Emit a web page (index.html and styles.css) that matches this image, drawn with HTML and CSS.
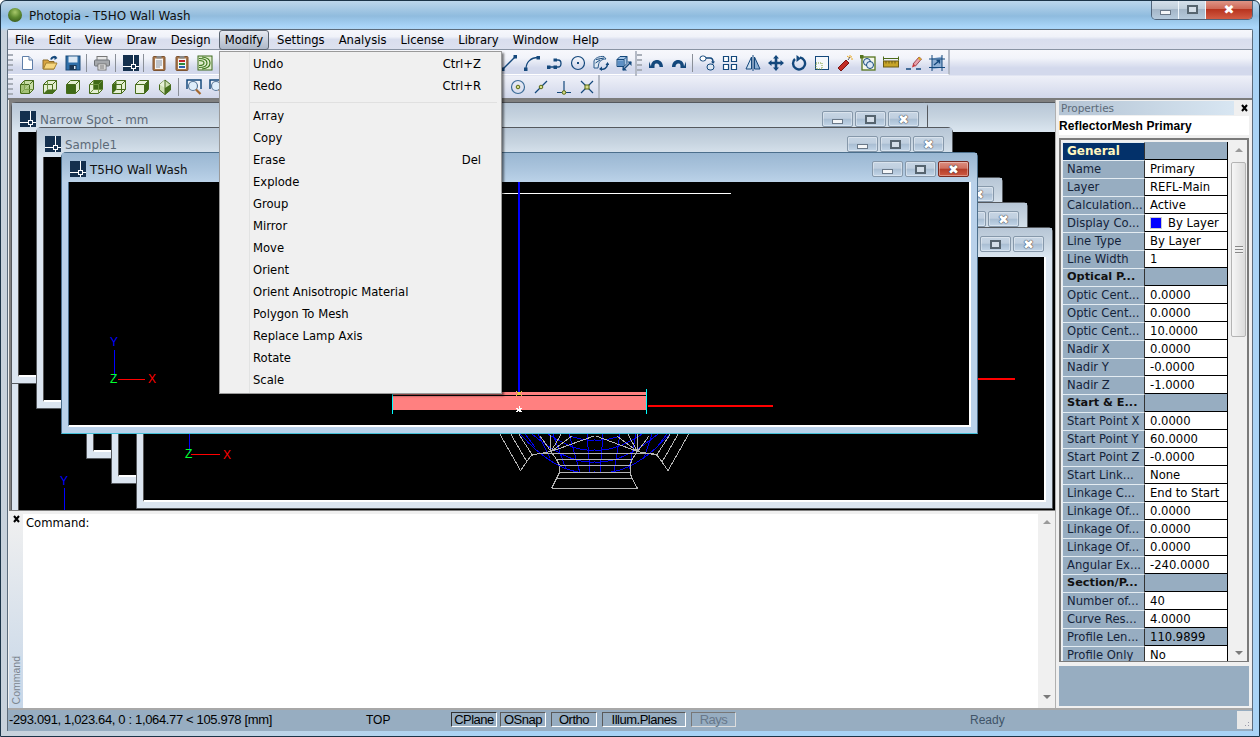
FILE: index.html
```html
<!DOCTYPE html>
<html lang="en">
<head>
<meta charset="utf-8">
<title>Photopia - T5HO Wall Wash</title>
<link rel="stylesheet" href="styles.css">
</head>
<body>
<svg class="defs" width="0" height="0" aria-hidden="true">
  <symbol id="i-grid" viewBox="0 0 16 16"><rect width="16" height="16" fill="#14304e"/><path d="M0 11.5H16M10.5 0V16" stroke="#fff" fill="none"/><rect x="8.5" y="9.5" width="4" height="4" fill="#14304e" stroke="#fff"/></symbol>
  <symbol id="i-new" viewBox="0 0 16 16"><path d="M3.5 1.5H10L13.5 5V14.5H3.5Z" fill="#fff" stroke="#5e7ea8"/><path d="M10 1.5V5H13.5" fill="#dce6f4" stroke="#5e7ea8"/></symbol>
  <symbol id="i-open" viewBox="0 0 16 16"><path d="M1 5H6L7 6.5H12V14H1Z" fill="#d9a441" stroke="#8a6a2a"/><path d="M1.5 14L4 8H15L12 14Z" fill="#f6d67e" stroke="#a5822f"/><path d="M9 4.5C10 2 12 1.5 14 2.500" stroke="#14487c" stroke-width="2" fill="none"/><path d="M12.500 .5L15.500 3L12.500 5Z" fill="#14487c"/></symbol>
  <symbol id="i-save" viewBox="0 0 16 16"><rect x="1" y="1" width="14" height="14" fill="#2f6ea8" stroke="#1b4a78"/><rect x="3.500" y="1.500" width="9" height="6" fill="#dce8f4"/><rect x="4.500" y="10" width="7" height="5" fill="#1b3654"/><rect x="9" y="11" width="1.500" height="3" fill="#dce8f4"/></symbol>
  <symbol id="i-print" viewBox="0 0 16 16"><rect x="3" y="1.500" width="10" height="4" fill="#e8e8e8" stroke="#777"/><rect x=".5" y="5" width="15" height="6" rx="1" fill="#a5a8ac" stroke="#6d7176"/><rect x="4" y="9" width="8" height="6" fill="#fff" stroke="#777"/><path d="M5.500 11H10.500M5.500 13H10.500" stroke="#555"/></symbol>
  <symbol id="i-clip" viewBox="0 0 16 16"><rect x="2" y="1.500" width="12" height="14" rx="1" fill="#a8764a" stroke="#7c5330"/><rect x="4" y="3.500" width="8" height="10.500" fill="#f4f4f4"/><rect x="5.500" y="1" width="5" height="2.500" fill="#888"/><path d="M5 6H11M5 8H11M5 10H11M5 12H9" stroke="#8a93a0"/></symbol>
  <symbol id="i-clip2" viewBox="0 0 16 16"><rect x="2" y="1.500" width="12" height="14" rx="1" fill="#a8764a" stroke="#7c5330"/><rect x="4" y="3.500" width="8" height="10.500" fill="#f4f4f4"/><rect x="5.500" y="1" width="5" height="2.500" fill="#888"/><rect x="5" y="5" width="6" height="2" fill="#c2242a"/><rect x="5" y="8" width="6" height="2" fill="#2c8a3c"/><rect x="5" y="11" width="6" height="2" fill="#2a5fb0"/></symbol>
  <symbol id="i-wave" viewBox="0 0 16 16"><rect x="1" y="1" width="14" height="14" fill="#dfeccd" stroke="#3f6b1e"/><path d="M2 5.500C5 5.500 7 6.500 7 8S5 10.500 2 10.500M2 3.500C7 3.500 10 5.500 10 8S7 12.500 2 12.500M5 2C10 2.500 13 5 13 8S10 13.500 5 14" fill="none" stroke="#3f7a20" stroke-width="1.200"/></symbol>
  <symbol id="c1" viewBox="0 0 16 16"><path d="M1.500 5.500L5.500 1.500H14.500V10.500L10.500 14.500H1.500Z" fill="#c7dca4" stroke="#466b1a"/><path d="M1.500 5.500H10.500V14.500M10.500 5.500L14.500 1.500" fill="none" stroke="#466b1a"/><path d="M1.500 14.500L10.500 5.500" stroke="#fff"/><path d="M5.500 1.500V10.500H14.500M5.500 10.500L1.500 14.500" fill="none" stroke="#6e9340"/><path d="M2 6H10V14H2Z" fill="#8cb05a" opacity=".6"/></symbol>
  <symbol id="c2" viewBox="0 0 16 16"><path d="M1.500 5.500L5.500 1.500H14.500V10.500L10.500 14.500H1.500Z" fill="#e4efd2" stroke="#466b1a"/><path d="M1.500 5.500H10.500V14.500M10.500 5.500L14.500 1.500" fill="none" stroke="#466b1a"/><path d="M1.500 14.500L5.500 10.500H14.500L10.500 14.500Z" fill="#47701c"/><path d="M5.500 1.500V10.500" stroke="#6e9340"/></symbol>
  <symbol id="c3" viewBox="0 0 16 16"><path d="M1.500 5.500L5.500 1.500H14.500V10.500L10.500 14.500H1.500Z" fill="#e4efd2" stroke="#466b1a"/><path d="M2 6H10V14H2Z" fill="#3f6a16"/><path d="M1.500 5.500H10.500V14.500M10.500 5.500L14.500 1.500" fill="none" stroke="#466b1a"/></symbol>
  <symbol id="c4" viewBox="0 0 16 16"><path d="M1.500 5.500L5.500 1.500H14.500V10.500L10.500 14.500H1.500Z" fill="#e4efd2" stroke="#466b1a"/><path d="M6 2H14V10H6Z" fill="#3f6a16"/><path d="M1.500 5.500H10.500V14.500M10.500 5.500L14.500 1.500M5.500 1.500V10.500H14.500M5.500 10.500L1.500 14.500" fill="none" stroke="#6e9340"/></symbol>
  <symbol id="c5" viewBox="0 0 16 16"><path d="M1.500 5.500L5.500 1.500H14.500V10.500L10.500 14.500H1.500Z" fill="#e4efd2" stroke="#466b1a"/><path d="M2 6L5.500 2V10.500L2 14Z" fill="#3f6a16"/><path d="M1.500 5.500H10.500V14.500M10.500 5.500L14.500 1.500M5.500 10.500H14.500" fill="none" stroke="#466b1a"/></symbol>
  <symbol id="c6" viewBox="0 0 16 16"><path d="M1.500 5.500L5.500 1.500H14.500V10.500L10.500 14.500H1.500Z" fill="#e9f2da" stroke="#466b1a"/><path d="M11 5.500L14 2V10.500L11 14Z" fill="#3f6a16"/><path d="M1.500 5.500H10.500V14.500M10.500 5.500L14.500 1.500" fill="none" stroke="#466b1a"/></symbol>
  <symbol id="c7" viewBox="0 0 16 16"><path d="M8 1L13.500 5.500V11L8 15.500L2.500 11V5.500Z" fill="#cfe0b4" stroke="#466b1a"/><path d="M8 1L2.500 5.500L8 9Z" fill="#e9f2da"/><path d="M8 9L13.500 5.500V11L8 15.500Z" fill="#47701c"/><path d="M8 1V15.500" stroke="#466b1a"/></symbol>
  <symbol id="i-zoom" viewBox="0 0 16 16"><path d="M1 10V1H15V10" fill="#eef3fa" stroke="#14487c" stroke-width="1.500"/><circle cx="7" cy="7" r="4.500" fill="#dfeefb" stroke="#5a7898" stroke-width="1.200"/><path d="M10 10.500L14.500 15" stroke="#a5682f" stroke-width="2.200"/></symbol>
  <symbol id="i-line" viewBox="0 0 16 16"><path d="M2 14L14 2" stroke="#14487c" stroke-width="1.300"/><rect x="0" y="12.500" width="3.500" height="3.500" fill="#14487c"/><rect x="12.500" y="0" width="3.500" height="3.500" fill="#14487c"/></symbol>
  <symbol id="i-arc" viewBox="0 0 16 16"><path d="M2 14C2 7 7 2.500 14 2.500" fill="none" stroke="#14487c" stroke-width="1.300"/><rect x="0" y="12.500" width="3.500" height="3.500" fill="#14487c"/><rect x="12.500" y="1" width="3.500" height="3.500" fill="#14487c"/></symbol>
  <symbol id="i-poly" viewBox="0 0 16 16"><path d="M1 12H11C15 12 15 5 11 5H8" fill="none" stroke="#14487c" stroke-width="1.300"/><rect x="0" y="10.500" width="3.500" height="3.500" fill="#14487c"/><rect x="6.500" y="10.500" width="3.500" height="3.500" fill="#14487c"/><rect x="6.500" y="3.500" width="3.500" height="3" fill="#14487c"/></symbol>
  <symbol id="i-circle" viewBox="0 0 16 16"><circle cx="8" cy="8" r="6.500" fill="none" stroke="#14487c" stroke-width="1.200"/><rect x="7" y="7" width="2" height="2" fill="#14487c"/></symbol>
  <symbol id="i-rev" viewBox="0 0 16 16"><path d="M1 13V6C2 3 6 1 11 1.500L13 4C9 4 6 6 5.500 10L5 13Z" fill="#dfe8f2" stroke="#2b5a8a"/><path d="M3 4.500L11 3M2.500 8L7 5" stroke="#14487c"/><path d="M8 14C11 15 14 13 14.500 9.500" fill="none" stroke="#14487c" stroke-width="1.600"/><path d="M12.500 10H16.500L14.500 7Z M9 11.500V16L6 14Z" fill="#14487c"/></symbol>
  <symbol id="i-ext" viewBox="0 0 16 16"><path d="M1 4.500L4 1.500H11V8.500L8 11.500H1Z" fill="#a8c6e6" stroke="#14487c"/><path d="M1 4.500H8V11.500M8 4.500L11 1.500" fill="none" stroke="#14487c"/><path d="M2 5.500H7.500V11H2Z" fill="#5d8fc4"/><path d="M7 15L15 7" stroke="#14487c" stroke-width="1.500"/><path d="M15.500 6.500V11L11.500 6.500ZM6.500 15.500V11L11 15.500Z" fill="#14487c"/></symbol>
  <symbol id="i-undo" viewBox="0 0 16 16"><path d="M3 12C3 7.500 6 5.500 9 5.500S15 8 15 12.500H11.500C11.500 10.500 10.500 9 8.500 9S6.500 10.500 6.500 12.500L6.500 13.500H1V7Z" fill="#14487c" transform="translate(0 -.5)"/></symbol>
  <symbol id="i-redo" viewBox="0 0 16 16"><path d="M13 12C13 7.500 10 5.500 7 5.500S1 8 1 12.500H4.500C4.500 10.500 5.500 9 7.500 9S9.500 10.500 9.500 12.500L9.500 13.500H15V7Z" fill="#14487c" transform="translate(0 -.5)"/></symbol>
  <symbol id="i-copy" viewBox="0 0 16 16"><rect x="1" y="1" width="6" height="5" rx="2.500" fill="#fff" stroke="#14487c"/><rect x="8" y="9" width="7" height="6" rx="3" fill="#dfe8f2" stroke="#14487c"/><path d="M7 3H11C13 3 14 4 14 7" fill="none" stroke="#14487c" stroke-width="1.500"/><path d="M12 6.500H16L14 9Z" fill="#14487c"/></symbol>
  <symbol id="i-array" viewBox="0 0 16 16"><path d="M1.500 1.500H6.500V6.500H1.500ZM9.500 1.500H14.500V6.500H9.500ZM1.500 9.500H6.500V14.500H1.500ZM9.500 9.500H14.500V14.500H9.500Z" fill="#fff" stroke="#14487c" stroke-width="1.200"/></symbol>
  <symbol id="i-mirror" viewBox="0 0 16 16"><path d="M6.500 2L1 14H6.500Z" fill="#cfe0f0" stroke="#14487c"/><path d="M9.500 2L15 14H9.500Z" fill="#8db0d4" stroke="#14487c"/><path d="M8 0V16" stroke="#14487c"/></symbol>
  <symbol id="i-move" viewBox="0 0 16 16"><path d="M8 0L11 3.500H9.300V6.700H12.500V5L16 8L12.500 11V9.300H9.300V12.500H11L8 16L5 12.500H6.700V9.300H3.500V11L0 8L3.500 5V6.700H6.700V3.500H5Z" fill="#14487c"/></symbol>
  <symbol id="i-rot" viewBox="0 0 16 16"><path d="M9 2.500A6 6 0 1 1 4 4" fill="none" stroke="#14487c" stroke-width="2.400"/><path d="M5.500 0V7L10 3.500Z" fill="#14487c"/></symbol>
  <symbol id="i-scale" viewBox="0 0 16 16"><rect x="1.500" y="1.500" width="13" height="13" fill="#f4f7fb" stroke="#14487c"/><rect x="2" y="8" width="6" height="6" fill="none" stroke="#7a9a30" stroke-dasharray="1 1"/></symbol>
  <symbol id="i-dyn" viewBox="0 0 16 16"><path d="M1 13L9 5L12 8L4 16Z" fill="#c22d26" stroke="#7c1410"/><path d="M11 5C12 4 12 3 13 2" stroke="#555" fill="none"/><path d="M13 0V2M15 1.500L13.500 2.500M16 4H14M10 1L12 2.500" stroke="#e8a820"/></symbol>
  <symbol id="i-lens" viewBox="0 0 16 16"><rect x="2" y="2" width="13" height="13" fill="#f4f7ea" stroke="#55741e" stroke-width="1.300"/><rect x="0" y="0" width="3.500" height="3.500" fill="#55741e"/><circle cx="7" cy="7" r="3.500" fill="#dfeaf5" stroke="#14487c"/><circle cx="10" cy="10" r="3.500" fill="#dfeaf5" stroke="#14487c"/></symbol>
  <symbol id="i-ruler" viewBox="0 0 16 16"><rect x=".5" y="6" width="15" height="6" fill="#c8a528" stroke="#6c5a14"/><path d="M.5 3.500H15.500M.5 1.500V5.500M15.500 1.500V5.500" stroke="#4c6a18"/><path d="M3 6V8.500M6 6V8.500M9 6V8.500M12 6V8.500" stroke="#6c5a14"/></symbol>
  <symbol id="i-brush" viewBox="0 0 16 16"><path d="M7 9L13 2L15.500 4L9.500 11Z" fill="#e8a0a8" stroke="#9a4a58"/><path d="M12 3.500L14 5.500L15.500 4L13 2Z" fill="#d8b020"/><path d="M7 9L9.500 11L6 12.500Z" fill="#c33"/><path d="M0 14H5M10 14H15" stroke="#14487c" stroke-width="1.500"/></symbol>
  <symbol id="i-mesh" viewBox="0 0 16 16"><path d="M3 3.500L13 1.500V12.500L3 14.500Z" fill="#8fb0d4"/><path d="M0 4H16M0 12.500H16M3 0V16M13 0V16" stroke="#14487c"/><path d="M5 10L10 6M7.500 5.500H10.500V8.500" stroke="#14487c" fill="none" stroke-width="1.400"/></symbol>
  <symbol id="s-cen" viewBox="0 0 16 16"><circle cx="8" cy="8" r="6.500" fill="none" stroke="#3c6c98" stroke-width="1.200"/><circle cx="8" cy="8" r="1.800" fill="#d6dc8a" stroke="#5a6a14"/></symbol>
  <symbol id="s-mid" viewBox="0 0 16 16"><path d="M2 14L14 2" stroke="#14487c" stroke-width="1.200"/><circle cx="8" cy="8" r="1.800" fill="#d6dc8a" stroke="#5a6a14"/></symbol>
  <symbol id="s-per" viewBox="0 0 16 16"><path d="M1 13.500H15M8 2V13" stroke="#14487c" stroke-width="1.200"/><circle cx="8" cy="13.500" r="1.800" fill="#d6dc8a" stroke="#5a6a14"/></symbol>
  <symbol id="s-int" viewBox="0 0 16 16"><path d="M2 2L14 14M14 2L2 14" stroke="#14487c" stroke-width="1.200"/><rect x="6" y="6" width="4" height="4" fill="#d6dc8a" stroke="#5a6a14"/></symbol>
  <symbol id="i-pad" viewBox="0 0 9 9"><path d="M2 1L7 7M7 1L2 7" stroke="#000" stroke-width="2" fill="none"/></symbol>
</svg>

<div class="app">
  <header class="glass">
    <span class="orb"></span>
    <span class="glass-title">Photopia - T5HO Wall Wash</span>
    <div class="caption">
      <span class="cap cap-min"><i class="glyph-min"></i></span>
      <span class="cap cap-max"><i class="glyph-max"></i></span>
      <span class="cap cap-close">✖</span>
    </div>
  </header>

  <div class="client">
    <nav class="menubar">
      <span class="mi">File</span><span class="mi">Edit</span><span class="mi">View</span><span class="mi">Draw</span><span class="mi">Design</span><span class="mi mi-on">Modify</span><span class="mi">Settings</span><span class="mi">Analysis</span><span class="mi">License</span><span class="mi">Library</span><span class="mi">Window</span><span class="mi">Help</span>
    </nav>

    <div class="dock">
      <div class="tb tb-one">
        <span class="grip"></span>
        <span class="ic"><svg><use href="#i-new"/></svg></span>
        <span class="ic"><svg><use href="#i-open"/></svg></span>
        <span class="ic"><svg><use href="#i-save"/></svg></span>
        <span class="sep"></span>
        <span class="ic"><svg><use href="#i-print"/></svg></span>
        <span class="sep"></span>
        <span class="ic"><svg><use href="#i-grid"/></svg></span>
        <span class="sep sep-tight"></span>
        <span class="ic"><svg><use href="#i-clip"/></svg></span>
        <span class="ic"><svg><use href="#i-clip2"/></svg></span>
        <span class="ic"><svg><use href="#i-wave"/></svg></span>
        <span class="gap-one"></span>
        <span class="ic"><svg><use href="#i-line"/></svg></span>
        <span class="ic"><svg><use href="#i-arc"/></svg></span>
        <span class="ic"><svg><use href="#i-poly"/></svg></span>
        <span class="ic"><svg><use href="#i-circle"/></svg></span>
        <span class="ic"><svg><use href="#i-rev"/></svg></span>
        <span class="ic"><svg><use href="#i-ext"/></svg></span>
        <span class="tb-break"></span>
        <span class="grip"></span>
        <span class="ic"><svg><use href="#i-undo"/></svg></span>
        <span class="ic"><svg><use href="#i-redo"/></svg></span>
        <span class="sep sep-mid"></span>
        <span class="ic"><svg><use href="#i-copy"/></svg></span>
        <span class="ic"><svg><use href="#i-array"/></svg></span>
        <span class="ic"><svg><use href="#i-mirror"/></svg></span>
        <span class="ic"><svg><use href="#i-move"/></svg></span>
        <span class="ic"><svg><use href="#i-rot"/></svg></span>
        <span class="ic"><svg><use href="#i-scale"/></svg></span>
        <span class="ic"><svg><use href="#i-dyn"/></svg></span>
        <span class="ic"><svg><use href="#i-lens"/></svg></span>
        <span class="ic"><svg><use href="#i-ruler"/></svg></span>
        <span class="ic"><svg><use href="#i-brush"/></svg></span>
        <span class="ic"><svg><use href="#i-mesh"/></svg></span>
      </div>
      <div class="tb tb-two">
        <span class="grip"></span>
        <span class="ic"><svg><use href="#c1"/></svg></span>
        <span class="ic"><svg><use href="#c2"/></svg></span>
        <span class="ic"><svg><use href="#c3"/></svg></span>
        <span class="ic"><svg><use href="#c4"/></svg></span>
        <span class="ic"><svg><use href="#c5"/></svg></span>
        <span class="ic"><svg><use href="#c6"/></svg></span>
        <span class="ic"><svg><use href="#c7"/></svg></span>
        <span class="sep"></span>
        <span class="ic"><svg><use href="#i-zoom"/></svg></span>
        <span class="ic"><svg><use href="#i-zoom"/></svg></span>
        <span class="gap-two"></span>
        <span class="ic"><svg><use href="#s-cen"/></svg></span>
        <span class="ic"><svg><use href="#s-mid"/></svg></span>
        <span class="ic"><svg><use href="#s-per"/></svg></span>
        <span class="ic"><svg><use href="#s-int"/></svg></span>
      </div>
    </div>

    <div class="main">
      <div class="work">
        <div class="mdi-area">
          <section class="mdi w0">
            <div class="mdi-head"></div>
            <div class="mdi-view">
              <svg class="draw" viewBox="19 132 1100 400">
                <path d="M64.500 488V510" stroke="#00f"/>
                <text x="60" y="485" class="ax ax-y">Y</text>
              </svg>
            </div>
          </section>
          <section class="mdi w1">
            <div class="mdi-head">
              <svg class="mdi-ic"><use href="#i-grid"/></svg><span class="mdi-name">Narrow Spot - mm</span>
              <div class="mdi-btns"><span class="mb"><i class="glyph-min"></i></span><span class="mb"><i class="glyph-max"></i></span><span class="mb mb-x">✖</span></div>
            </div>
            <div class="mdi-view"></div>
          </section>
          <section class="mdi w2">
            <div class="mdi-head">
              <svg class="mdi-ic"><use href="#i-grid"/></svg><span class="mdi-name">Sample1</span>
              <div class="mdi-btns"><span class="mb"><i class="glyph-min"></i></span><span class="mb"><i class="glyph-max"></i></span><span class="mb mb-x">✖</span></div>
            </div>
            <div class="mdi-view"></div>
          </section>
          <section class="mdi w4">
            <div class="mdi-head"><div class="mdi-btns"><span class="mb"><i class="glyph-min"></i></span><span class="mb"><i class="glyph-max"></i></span><span class="mb mb-x">✖</span></div></div>
            <div class="mdi-view"></div>
          </section>
          <section class="mdi w5">
            <div class="mdi-head"><div class="mdi-btns"><span class="mb"><i class="glyph-min"></i></span><span class="mb"><i class="glyph-max"></i></span><span class="mb mb-x">✖</span></div></div>
            <div class="mdi-view"></div>
          </section>
          <section class="mdi w6">
            <div class="mdi-head"><div class="mdi-btns"><span class="mb"><i class="glyph-min"></i></span><span class="mb"><i class="glyph-max"></i></span><span class="mb mb-x">✖</span></div></div>
            <div class="mdi-view">
              <svg class="draw" viewBox="144 257 900 243">
                <path d="M978 379H1015" stroke="#f00" stroke-width="2"/>
                <path d="M189.500 434V453" stroke="#00f"/>
                <path d="M191 454.500H220" stroke="#f00"/>
                <text x="185" y="458" class="ax ax-z">Z</text>
                <text x="223" y="459" class="ax ax-x">X</text>
                <g fill="none" stroke="#0000f0">
                  <path d="M520 434Q560 478 594.500 472Q630 478 670 434"/>
                  <path d="M532 434Q568 464 594.500 462Q622 464 658 434"/>
                  <path d="M548 434Q575 452 594.500 450Q615 452 642 434"/>
                  <path d="M570 436Q585 441 594.500 440Q605 441 620 436"/>
                  <path d="M525 434L535 447M538 434L550 458M553 434L566 469M569 434L580 473M587 434L590 473M603 434L600 473M620 434L614 473M636 434L629 469M652 434L644 458M667 434L657 447"/>
                </g>
                <g fill="none" stroke="#b4b4b4">
                  <path d="M500 434.500L520.500 470.500L531.500 455L551 451.500M688.500 434.500L668 470.500L657 455L637.500 451.500"/>
                  <path d="M511 434.500L527 462M678 434.500L662 462M519 434.500L533 456M670 434.500L656 456"/>
                  <path d="M536.500 453.500H653.500"/>
                  <path d="M556.500 459.500H632M559.500 465.500H630M559.500 472.500H630M556.500 478.500H632M551.500 488.500H637.500"/>
                  <path d="M559.500 465.500V472.500L556.500 478.500L551.500 488.500M630 465.500V472.500L632 478.500L637.500 488.500M551 451.500L556.500 459.500L559.500 465.500M637.500 451.500L632 459.500L630 465.500"/>
                  <path d="M551 451.500L550 434.500M551 451.500L561 434.500M551 451.500L572 436M551 451.500L594 436M637.500 451.500L638 434.500M637.500 451.500L628 434.500M637.500 451.500L617 436M637.500 451.500L596 436M551 451.500L540 436M637.500 451.500L649 436"/>
                </g>
              </svg>
            </div>
          </section>
          <section class="mdi w3">
            <div class="mdi-head">
              <svg class="mdi-ic"><use href="#i-grid"/></svg><span class="mdi-name">T5HO Wall Wash</span>
              <div class="mdi-btns"><span class="mb"><i class="glyph-min"></i></span><span class="mb"><i class="glyph-max"></i></span><span class="mb mb-x mb-red">✖</span></div>
            </div>
            <div class="mdi-view">
              <svg class="draw" viewBox="69 182 900 243">
                <path d="M400 193.500H731" stroke="#fff"/>
                <path d="M519 182V392" stroke="#00f" stroke-width="2"/>
                <rect x="393" y="392" width="253" height="18" fill="#ff8080"/>
                <path d="M393 395.500H646" stroke="#000"/>
                <rect x="392" y="389" width="1" height="25" fill="#00ffff"/>
                <rect x="646" y="389" width="1" height="25" fill="#00ffff"/>
                <path d="M648 406H773" stroke="#f00" stroke-width="2"/>
                <path d="M516 391L522 396M522 391L516 396" stroke="#e8d040"/>
                <path d="M516 408L522 412M522 408L516 412M519 406V412" stroke="#fff"/>
                <path d="M114.500 350V378" stroke="#00f"/>
                <path d="M118 379.500H145" stroke="#f00"/>
                <text x="110" y="346" class="ax ax-y">Y</text>
                <text x="110" y="383" class="ax ax-z">Z</text>
                <text x="148" y="383" class="ax ax-x">X</text>
              </svg>
            </div>
          </section>
        </div>

        <div class="cmd">
          <div class="cmd-strip">
            <svg class="pad"><use href="#i-pad"/></svg>
            <span class="cmd-label">Command</span>
          </div>
          <div class="cmd-text">Command:</div>
          <div class="vscroll vscroll-cmd"><span class="arrow-up"></span><span class="arrow-down"></span></div>
        </div>
      </div>

      <aside class="props">
        <div class="props-head">
          <span class="props-title">Properties</span>
          <svg class="pad"><use href="#i-pad"/></svg>
        </div>
        <div class="props-name">ReflectorMesh Primary</div>
        <div class="grid-frame">
          <div class="grid">
            <div class="row row-sel"><span class="k">General</span><span class="v"></span></div>
            <div class="row"><span class="k">Name</span><span class="v">Primary</span></div>
            <div class="row"><span class="k">Layer</span><span class="v">REFL-Main</span></div>
            <div class="row"><span class="k">Calculation...</span><span class="v">Active</span></div>
            <div class="row"><span class="k">Display Co...</span><span class="v"><i class="swatch"></i>By Layer</span></div>
            <div class="row"><span class="k">Line Type</span><span class="v">By Layer</span></div>
            <div class="row"><span class="k">Line Width</span><span class="v">1</span></div>
            <div class="row row-cat"><span class="k">Optical P...</span><span class="v"></span></div>
            <div class="row"><span class="k">Optic Cent...</span><span class="v">0.0000</span></div>
            <div class="row"><span class="k">Optic Cent...</span><span class="v">0.0000</span></div>
            <div class="row"><span class="k">Optic Cent...</span><span class="v">10.0000</span></div>
            <div class="row"><span class="k">Nadir X</span><span class="v">0.0000</span></div>
            <div class="row"><span class="k">Nadir Y</span><span class="v">-0.0000</span></div>
            <div class="row"><span class="k">Nadir Z</span><span class="v">-1.0000</span></div>
            <div class="row row-cat"><span class="k">Start &amp; E...</span><span class="v"></span></div>
            <div class="row"><span class="k">Start Point X</span><span class="v">0.0000</span></div>
            <div class="row"><span class="k">Start Point Y</span><span class="v">60.0000</span></div>
            <div class="row"><span class="k">Start Point Z</span><span class="v">-0.0000</span></div>
            <div class="row"><span class="k">Start Link...</span><span class="v">None</span></div>
            <div class="row"><span class="k">Linkage C...</span><span class="v">End to Start</span></div>
            <div class="row"><span class="k">Linkage Of...</span><span class="v">0.0000</span></div>
            <div class="row"><span class="k">Linkage Of...</span><span class="v">0.0000</span></div>
            <div class="row"><span class="k">Linkage Of...</span><span class="v">0.0000</span></div>
            <div class="row"><span class="k">Angular Ex...</span><span class="v">-240.0000</span></div>
            <div class="row row-cat"><span class="k">Section/P...</span><span class="v"></span></div>
            <div class="row"><span class="k">Number of...</span><span class="v">40</span></div>
            <div class="row"><span class="k">Curve Res...</span><span class="v">4.0000</span></div>
            <div class="row row-ro"><span class="k">Profile Len...</span><span class="v">110.9899</span></div>
            <div class="row"><span class="k">Profile Only</span><span class="v">No</span></div>
          </div>
          <div class="vscroll vscroll-grid"><span class="arrow-up"></span><span class="thumb"><i></i></span><span class="arrow-down"></span></div>
        </div>
        <div class="props-help"></div>
      </aside>
    </div>

    <footer class="status">
      <span class="st-coord">-293.091, 1,023.64, 0 : 1,064.77 &lt; 105.978 [mm]</span>
      <span class="st-view">TOP</span>
      <span class="st-btn st-cplane st-press">CPlane</span>
      <span class="st-btn st-osnap">OSnap</span>
      <span class="st-btn st-ortho">Ortho</span>
      <span class="st-btn st-illum">Illum.Planes</span>
      <span class="st-btn st-rays">Rays</span>
      <span class="st-ready">Ready</span>
      <span class="st-grip"></span>
    </footer>
  </div>

  <div class="menu">
    <div class="m-row"><span>Undo</span><span>Ctrl+Z</span></div>
    <div class="m-row"><span>Redo</span><span>Ctrl+R</span></div>
    <div class="m-sep"></div>
    <div class="m-row"><span>Array</span></div>
    <div class="m-row"><span>Copy</span></div>
    <div class="m-row"><span>Erase</span><span>Del</span></div>
    <div class="m-row"><span>Explode</span></div>
    <div class="m-row"><span>Group</span></div>
    <div class="m-row"><span>Mirror</span></div>
    <div class="m-row"><span>Move</span></div>
    <div class="m-row"><span>Orient</span></div>
    <div class="m-row"><span>Orient Anisotropic Material</span></div>
    <div class="m-row"><span>Polygon To Mesh</span></div>
    <div class="m-row"><span>Replace Lamp Axis</span></div>
    <div class="m-row"><span>Rotate</span></div>
    <div class="m-row"><span>Scale</span></div>
  </div>
</div>
</body>
</html>
```

FILE: styles.css
```css
* { box-sizing: border-box; }
html, body { margin: 0; padding: 0; overflow: hidden; }
body { width: 1260px; height: 737px; font-family: "DejaVu Sans", sans-serif; font-size: 11.6px; color: #000; background: #fff; }
.defs { position: absolute; }

.app {
  position: relative; width: 1260px; height: 737px; overflow: hidden;
  display: flex; flex-direction: column;
  border: 1px solid #1c3448; border-radius: 6px 6px 0 0;
  background:
    linear-gradient(180deg, rgba(190,215,235,.9) 0, rgba(140,185,220,.9) 15px, rgba(170,214,250,1) 26px, rgba(170,214,250,0) 30px),
    linear-gradient(90deg, #c8d2dc 0, #c2d4e4 220px, #a9d3f5 500px, #a9d3f5 100%),
    linear-gradient(180deg, #c0d0de 0, #7fb2d8 35%, #3a90c8 80%, #6aa8d4 100%);
  padding: 0 6px 5px;
}

.glass { height: 28px; display: flex; align-items: center; position: relative; flex: none; }
.orb { width: 14px; height: 14px; margin: 0 7px 0 1px; border-radius: 50%; background: radial-gradient(circle at 50% 30%, #a8c86a 0, #5e8a30 45%, #2c4c18 100%); }
.glass-title { font-size: 11.9px; color: #111; padding-top: 1px; }
.caption { position: absolute; right: 0; top: -1px; display: flex; height: 20px; border: 1px solid #50647a; border-top: none; border-radius: 0 0 5px 5px; overflow: hidden; }
.cap { display: flex; align-items: center; justify-content: center; height: 19px; width: 27px; background: linear-gradient(180deg, #d8e2ec 0, #c0cfdc 45%, #a4b6c8 50%, #b6cadc 100%); border-right: 1px solid #f0f6fb; }
.cap-close { width: 46px; border-right: none; color: #fff; font-size: 13px; background: linear-gradient(180deg, #e09a8c 0, #cf6a58 45%, #b8341f 50%, #d25c44 100%); }
.glyph-min { display: block; width: 11px; height: 5px; margin-top: 6px; background: #f4f6f8; border: 1px solid #6a7888; }
.glyph-max { display: block; width: 11px; height: 9px; border: 2px solid #56646f; background: #d4dee8; }

.client { flex: 1; min-height: 0; display: flex; flex-direction: column; border: 1px solid #5c6c7c; border-bottom: none; background: #f0f0f0; border-radius: 2px 2px 0 0; }

.menubar { height: 20px; flex: none; display: flex; align-items: center; padding-left: 7px; gap: 14px; font-size: 11.6px; background: linear-gradient(180deg, #f6f7fc 0, #f0f2f9 35%, #d9deee 50%, #dde1ef 100%); border-bottom: 1px solid #8a94a4; }
.mi { line-height: 20px; white-space: nowrap; }
.mi-on { margin: 0 -6px; padding: 0 5px; height: 20px; border: 1px solid #5a6470; border-radius: 3px; line-height: 18px; background: linear-gradient(180deg, #e6e9f0 0, #c8d0dc 50%, #aeb8c8 100%); }

.dock { height: 50px; flex: none; display: flex; flex-direction: column; background: linear-gradient(180deg, #f7f8fc 0, #f2f4fa 8px, #d3d9ec 18px, #d3d9ec 25px, #eef0f8 26px, #d0d6ea 49px); border-bottom: 2px solid #7c7c7c; }
.tb { height: 25px; display: flex; align-items: center; flex: none; }
.tb-one { width: 942px; border-right: 2px solid #b4bac6; border-bottom: 1px solid #fff; height: 25px; padding-top: 2px; }
.tb-two { width: 592px; border-right: 2px solid #b4bac6; height: 23px; }
.grip { width: 5px; height: 18px; margin-right: 2px; flex: none; background: repeating-linear-gradient(180deg, #a8aeb8 0, #a8aeb8 2px, transparent 2px, transparent 5px); }
.ic { width: 23px; height: 22px; display: flex; align-items: center; justify-content: center; flex: none; }
.ic svg { width: 16px; height: 16px; display: block; }
.sep { width: 1px; height: 18px; margin: 0 3px 0 2px; background: #8a8f98; flex: none; }
.sep-tight { margin: 0 3px 0 1px; }
.sep-mid { margin: 0 2px 0 2px; }
.gap-one { width: 281px; flex: none; }
.gap-two { width: 278px; flex: none; }
.tb-break { width: 2px; height: 25px; background: #b4bac6; flex: none; }

.main { flex: 1; min-height: 0; display: flex; }
.work { width: 1047px; flex: none; display: flex; flex-direction: column; padding-left: 1px; }
.mdi-area { height: 410px; position: relative; overflow: hidden; background: #808080; flex: none; }

.mdi { position: absolute; width: 917px; height: 282px; display: flex; flex-direction: column; padding: 0 6px 6px; border: 1px solid #55595e; border-radius: 5px 5px 0 0; background: #dbe5f0; }
.w0 { left: 2px; top: 2px; width: 1100px; height: 500px; }
.w1 { left: 2px; top: 2px; }
.w2 { left: 27px; top: 27px; }
.w3 { left: 52px; top: 52px; background: #b9d1ea; border-color: #4c6f8c; border-bottom-color: #44c0d8; z-index: 5; }
.w4 { left: 77px; top: 77px; }
.w5 { left: 102px; top: 102px; }
.w6 { left: 127px; top: 127px; }
.mdi-head { height: 29px; flex: none; display: flex; align-items: flex-start; padding: 8px 8px 0; margin: 0 -6px; background: linear-gradient(180deg, #b7c6d6 0, #c7d4e0 50%, #dbe6f0 100%); }
.w3 .mdi-head { background: linear-gradient(180deg, #9ab7d2 0, #a9c3dc 50%, #bbd2e8 100%); }
.mdi-ic { width: 16px; height: 16px; flex: none; }
.mdi-name { font-size: 11.9px; color: #5c6a78; margin: 1px 0 0 4px; line-height: 17px; white-space: nowrap; }
.w3 .mdi-name { color: #111; }
.mdi-btns { margin-left: auto; display: flex; gap: 2px; }
.mb { width: 31px; height: 16px; display: flex; align-items: center; justify-content: center; border: 1px solid #8698aa; border-radius: 2px; background: linear-gradient(180deg, #c6d5e4 0, #c0cfdf 45%, #a8bdd2 50%, #c4d6e8 100%); box-shadow: inset 0 0 0 1px rgba(255,255,255,.35); }
.mb .glyph-min { margin-top: 4px; }
.mb-x { color: #fff; font-size: 13px; text-shadow: 0 0 1px #223, 0 0 1px #223; }
.mb-red { background: linear-gradient(180deg, #dc8e80 0, #cf7060 45%, #b33c28 50%, #cf5a42 100%); border-color: #7a2a20; color: #fff; }
.mdi-view { flex: 1; min-height: 0; position: relative; background: #000; border-right: 2px solid #fff; border-bottom: 2px solid #fff; border-left: 1px solid #555; overflow: hidden; }
.w3 .mdi-view { border-left-color: #4c6f8c; }
.draw { position: absolute; left: 0; top: 0; shape-rendering: crispEdges; }
.w0 .draw { width: 1100px; height: 400px; }
.w3 .draw { width: 900px; height: 243px; }
.w6 .draw { width: 900px; height: 243px; }
.ax { font-family: "Liberation Sans", sans-serif; font-size: 12px; }
.ax-y { fill: #00f; }
.ax-z { fill: #00ff30; }
.ax-x { fill: #f00; }

.cmd { flex: 1; min-height: 0; display: flex; border-top: 1px solid #808080; padding-top: 3px; }
.cmd-strip { width: 14px; flex: none; display: flex; flex-direction: column; justify-content: space-between; align-items: center; background: linear-gradient(180deg, #f0f0f0 0, #c6d6e8 100%); padding: 1px 0 4px; }
.pad { width: 9px; height: 9px; flex: none; display: block; }
.cmd-label { writing-mode: vertical-rl; transform: rotate(180deg); font-family: "Liberation Sans", sans-serif; font-size: 10.5px; color: #7c8690; line-height: 12px; }
.cmd-text { flex: 1; background: #fff; padding: 1px 3px; line-height: 17px; font-size: 11.6px; }
.vscroll { flex: none; background: #f0f0f0; display: flex; flex-direction: column; justify-content: space-between; align-items: center; }
.vscroll-cmd { width: 17px; padding: 6px 0 9px; }
.arrow-up { width: 0; height: 0; border: 4px solid transparent; border-top: none; border-bottom: 4px solid #9a9a9a; flex: none; }
.arrow-down { width: 0; height: 0; border: 4px solid transparent; border-bottom: none; border-top: 4px solid #7a7a7a; flex: none; }

.props { width: 197px; flex: none; display: flex; flex-direction: column; padding: 2px 3px 2px 3px; background: #f0f0f0; border-left: 1px solid #b0b0b0; }
.props-head { height: 14px; flex: none; display: flex; align-items: center; justify-content: space-between; background: linear-gradient(90deg, #b4c4d4 0, #d8e6f2 92%, #f0f0f0 92%); margin-top: -1px; }
.props-title { font-size: 10.5px; color: #5c6a78; padding-left: 2px; }
.props-name { height: 19px; flex: none; font-family: "Liberation Sans", sans-serif; font-weight: 700; font-size: 12px; line-height: 21px; background: #fff; margin-top: 1px; letter-spacing: .1px; }
.grid-frame { height: 524px; margin-top: 3px; flex: none; display: flex; border: 2px solid #7a7a7a; border-bottom-width: 1px; padding: 2px 0 0 1px; background: #f0f0f0; overflow: hidden; }
.grid { width: 166px; flex: none; overflow: hidden; }
.row { height: 18px; display: flex; }
.k { width: 83px; flex: none; padding-left: 4px; line-height: 16px; white-space: nowrap; overflow: hidden; color: #14233a; background: #97adc1; border-top: 1px solid #e4ecf2; border-left: 1px solid #e4ecf2; border-right: 1px solid #333; }
.v { width: 83px; flex: none; padding-left: 5px; line-height: 18px; white-space: nowrap; background: #fff; border-bottom: 1px solid #000; border-right: 1px solid #000; }
.row-cat .k { font-weight: 700; color: #111; font-size: 11.3px; }
.row-cat .v, .row-ro .v { background: #97adc1; }
.row-sel .k { background: #03316a; color: #fff6bf; font-weight: 700; font-size: 12px; }
.row-sel .v { background: #97adc1; }
.swatch { display: inline-block; width: 12px; height: 12px; margin: 0 6px 0 0; background: #00f; vertical-align: -2px; border: 1px solid #ccc; }
.vscroll-grid { width: 17px; margin-left: 2px; padding: 6px 0 6px; justify-content: flex-start; }
.vscroll-grid .arrow-down { margin-top: auto; }
.vscroll-grid .thumb { width: 15px; height: 175px; margin-top: 10px; flex: none; display: flex; align-items: center; justify-content: center; background: linear-gradient(90deg, #f6f6f6, #dcdcdc); border: 1px solid #b4b4b4; border-radius: 2px; }
.thumb i { width: 8px; height: 8px; background: repeating-linear-gradient(180deg, #888 0, #888 1px, #f0f0f0 1px, #f0f0f0 3px); }
.props-help { height: 40px; margin-top: 4px; flex: none; background: #97adc1; }

.status { height: 23px; flex: none; position: relative; display: flex; align-items: center; background: #97adc1; border-top: 2px solid #a8a8a8; padding: 0 0 2px 1px; font-family: "Liberation Sans", sans-serif; font-size: 13px; color: #000; white-space: nowrap; }
.st-coord { width: 357px; flex: none; letter-spacing: -.35px; }
.st-view { width: 85px; flex: none; font-size: 12px; }
.st-btn { height: 15px; flex: none; text-align: center; line-height: 13px; border: 1px solid #5a5a5a; border-right-color: #fff; border-bottom-color: #fff; letter-spacing: -.5px; }
.st-cplane { width: 46px; margin-right: 3px; }
.st-press { border-color: #333 #fff #fff #333; }
.st-osnap { width: 46px; margin-right: 5px; }
.st-ortho { width: 46px; margin-right: 5px; }
.st-illum { width: 84px; margin-right: 5px; }
.st-rays { width: 45px; color: #68788a; border-color: #777 #ddd #ddd #777; }
.st-ready { margin-left: 234px; color: #405468; font-size: 12px; }
.st-grip { position: absolute; right: 0; top: 1px; width: 15px; height: 18px; background: #e8e8e8; }
.st-grip::after { content: ""; position: absolute; right: 1px; bottom: 1px; width: 10px; height: 10px; background: radial-gradient(circle, #99a 0 1px, transparent 1px) 0 0 / 3px 3px; clip-path: polygon(100% 0, 100% 100%, 0 100%); }

.menu { position: absolute; left: 218px; top: 50px; width: 283px; height: 343px; z-index: 20; padding: 1px 20px 0 33px; background: linear-gradient(90deg, #f0f0f0 0, #f0f0f0 29px, #e2e3e3 29px, #e2e3e3 30px, #f0f0f0 30px); border: 1px solid #9a9a9a; box-shadow: 2px 2px 2px rgba(0,0,0,.5); font-size: 11.6px; }
.m-row { height: 22px; display: flex; align-items: center; justify-content: space-between; }
.m-sep { height: 3px; margin: 5px -16px 0 -3px; border-top: 1px solid #e0e0e0; }
```
